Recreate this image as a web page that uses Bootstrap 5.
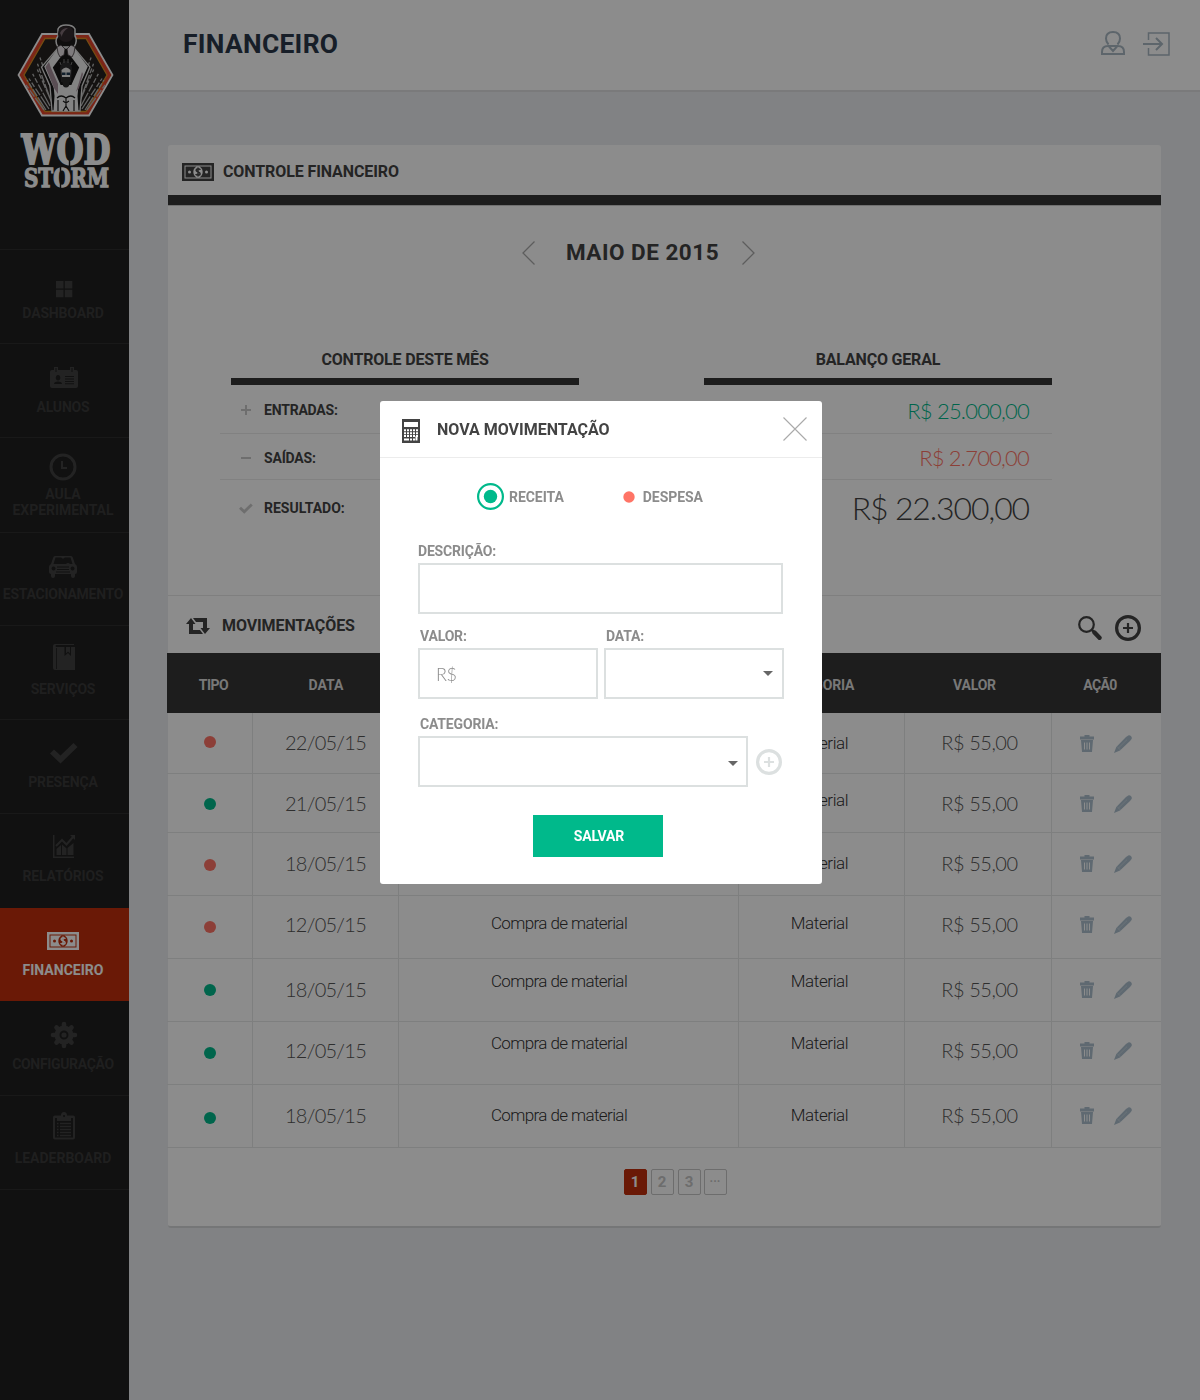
<!DOCTYPE html>
<html lang="pt-BR">
<head>
<meta charset="utf-8">
<meta name="viewport" content="width=device-width, initial-scale=1">
<title>WOD Storm - Financeiro</title>
<link href="https://cdn.jsdelivr.net/npm/bootstrap@5.3.0/dist/css/bootstrap.min.css" rel="stylesheet">
<style>
body{font-family:Roboto,"Liberation Sans",sans-serif;font-weight:700;background:#ecedf0;width:1200px;height:1400px;overflow:hidden;color:#434343;line-height:1}
svg{display:block;flex:none}
/* sidebar */
.side{width:129px;height:1400px;background:#1f1f1f;flex:none}
.brand{height:250px;padding:24px 0 0 16px;border-bottom:1px solid #2e2e2e}
.brand svg{overflow:visible}
.side .nav-link{height:94px;padding:0 3px 23px 0;border-bottom:1px solid #2e2e2e;border-radius:0;color:#393939;font-size:14px;line-height:16px;letter-spacing:-.17px;text-align:center;white-space:nowrap}
.side .nav-link svg{margin:0 0 7px 2px;fill:#414141}
.side .nav-link.active{background:#c12f0b;color:#fff;border-color:#c12f0b;height:93px;padding-bottom:22px;letter-spacing:0}
.side .nav-link.active svg{fill:#fff;margin-left:0}
.side .i-dash,.side .i-alu{padding-bottom:22px}
.side .i-dash svg{margin-bottom:2px}
.side .i-aula{height:95px;padding-bottom:14px;letter-spacing:-.04px}
.side .i-aula span{line-height:15.500px}
.side .i-aula svg,.side .i-car svg{margin-bottom:6px;margin-left:0}
.side .i-car{height:93px;letter-spacing:-.25px}
.side .i-car svg{margin-bottom:5px}
.side .i-book{padding-bottom:22px}
.side .i-book svg,.side .i-lead svg{margin-bottom:10px}
.side .i-rel{border-color:#1f1f1f}
.side .i-rel svg{margin-bottom:8px}
.side .i-conf{height:95px;letter-spacing:-.34px}
.side .i-lead{letter-spacing:0}
/* top bar */
.top{height:92px;background:#fff;border-bottom:2px solid #dedfe0;padding:0 30px 0 54px}
.top h1{font-size:26.4px;font-weight:700;color:#2a384a;margin:0;letter-spacing:.3px}
.top-icons{color:#a9b8c3;padding-bottom:5px;gap:17px}
/* main panel */
.panel{width:993px;margin:53px 0 0 39px;background:#fff;border-radius:3px;border-bottom:2px solid #d5d7d9;height:1083px}
.panel-top{height:50px;padding:3px 0 0 14px;gap:9px}
.ttl{font-size:16px;font-weight:700;margin:0;letter-spacing:-.1px}
.bar{height:11px;background:#353535;border-bottom:1px solid #ccc}
.month{height:93px;padding-right:52px}
.month h2{font-size:22.5px;font-weight:700;margin:0 23px 0 31px;letter-spacing:.5px}
.sum{padding:41px 109px 0 52px}
.sumcol{width:359px}
.sumhead{height:45px;margin-left:11px;padding-top:2px;border-bottom:7px solid #353535}
.sumhead .ttl{letter-spacing:-.18px}
.sumrow{padding:2px 23px 0 20px;font-size:14px;letter-spacing:-.2px;border-bottom:1px solid #ececec}
.sumrow svg{margin-right:12px}
.s1{height:49px}.s2{height:46px}.s3{height:54px;border:0;letter-spacing:0}
.money{font-family:Lato,sans-serif;font-weight:300;font-size:22px;letter-spacing:-.8px}
.s1 .money{padding-top:1px}
.money-xl{font-size:32px;letter-spacing:-1.15px}
.gr{color:#00b98b}.rd{color:#ff7466}
.mov{height:58px;margin-top:61px;border-top:1px solid #e8e8e8;padding:3px 20px 0 18px;color:#434343}
.mov-title{gap:12px}.mov-tools{gap:13px;padding-top:4px}
/* transactions */
.tx{table-layout:fixed;width:994px;margin:0 0 0 -1px;border-collapse:separate;border-spacing:0}
.tx th{height:60px;background:#353535;color:#dadada;font-size:14px;text-align:center;vertical-align:middle;padding:4px 0 0;letter-spacing:-.2px}
.tx th:nth-child(1){padding-left:7px;letter-spacing:-.5px}.tx th:nth-child(2){letter-spacing:0}
.tx th:nth-child(4){padding-right:10px}.tx th:nth-child(5){padding-right:8px}.tx th:nth-child(6){padding-right:13px;letter-spacing:-.6px}
.tx td{padding:0;text-align:center;vertical-align:middle;border-bottom:1px solid #e6e7e8;border-right:1px solid #e6e7e8;height:63px}
.tx td:last-child{border-right:0;padding-right:2px}
.tx tr:nth-child(1) td{height:61px}.tx tbody tr:nth-child(2) td{height:59px}
.tx .dt{font-family:Lato,sans-serif;font-weight:300;font-size:20px;letter-spacing:-.75px;color:#555;padding:0 0 2px 0}
.tx .vl{letter-spacing:-.45px;padding-left:3px}
.tx .ds{font-weight:300;font-size:17px;letter-spacing:-.6px;color:#333;padding-right:19px}
.tx .ct{letter-spacing:-.38px;padding-right:4px}
.dot{width:12px;height:12px;border-radius:50%;margin:0 auto}
.bg-g{background:#00b98b}.bg-r{background:#ff7466}
.act{fill:#adc0ce;gap:20px}
.tx tr:nth-child(2) .dt{padding-bottom:0}
.tx tr:nth-child(4) .dt,.tx tr:nth-child(6) .dt{padding-bottom:6px}
.tx tr:nth-child(4) .ac,.tx tr:nth-child(6) .ac{padding-bottom:4px}
.tx tr:nth-child(-n+2) .ac{padding-top:2px}
.tx tr:nth-child(2) .ds{padding-bottom:5px}.tx tr:nth-child(3) .ds{padding-bottom:2px}
.tx tr:nth-child(4) .ds{padding-bottom:7px}.tx tr:nth-child(5) .ds{padding-bottom:17px}
.tx tr:nth-child(6) .ds{padding-bottom:19px}.tx tr:nth-child(7) .ds{padding-bottom:1px}
.tx tr:nth-child(1) .tp{padding-bottom:2px}
.tx tr:nth-child(2) .tp,.tx tr:nth-child(3) .tp{padding-top:2px}.tx tr:nth-child(7) .tp{padding-top:4px}
.pagination{margin:21px 0 0 21px;gap:4px;--bs-pagination-padding-x:0;--bs-pagination-padding-y:0}
.pagination .page-item .page-link{width:23px;height:26px;line-height:24px;text-align:center;font-size:15px;color:#c6c6c6;border:1px solid #c6c6c6;border-radius:2px;background:#fff;margin:0}
.pagination .page-item:last-child{margin-left:-1px}
.pagination .page-item:last-child .page-link{font-size:12px}
.pagination .page-item.active .page-link{background:#c12f0b;border-color:#c12f0b;color:#fff}
/* dialog */
.modal-backdrop{--bs-backdrop-opacity:.45}
.modal-dialog{width:442px;max-width:none;margin:401px 0 0 380px}
.modal-content{border:0;border-radius:3px;height:483px}
.modal-header{height:57px;padding:0 15px 0 22px;border-bottom:1px solid #ececec;border-radius:0;gap:17px}
.modal-header svg:first-child{margin-top:4px}.modal-header .ttl{letter-spacing:0;padding-top:2px}
.modal-body{padding:25px 38px 27px;color:#8c8c8c;font-size:14px;letter-spacing:-.18px}
.kinds{height:27px;padding-left:59px;margin-bottom:33px;gap:59px;letter-spacing:-.05px}
.kinds label:first-child{gap:5px}.kinds label+label{gap:8px}
.field{display:block;height:16px;line-height:16px;margin-bottom:4px}
.duo{gap:6px;margin:14px -1px 17px 0}
.duo .field,.field.cat{padding-left:2px}
.form-control.box{height:51px;border:2px solid #dce0e0;border-radius:0;padding:0 16px;color:#8c8c8c;background:#fff;font:300 18px Lato,sans-serif;letter-spacing:-.5px}
.box.w-full{width:365px}.box.w-half{width:180px}.box.w-cat{width:330px}
.box.pick{padding-right:9px;fill:#666}
.w-cat.pick{padding-right:8px}
.addcat{color:#dce0e0;margin-left:8px}
.btn.save{width:130px;height:42px;border-radius:0;border:0;background:#00b98b;color:#fff;font-size:14px;font-weight:700;letter-spacing:-.15px;padding:1px 0 0 2px;margin:28px 0 0 115px;display:block}
</style>
</head>
<body>
<svg width="0" height="0" class="position-absolute">
<defs>
<symbol id="bill" viewBox="0 0 32 18"><path fill-rule="evenodd" d="M0 0H32V18H0ZM2.500 2.500V15.500H29.500V2.500ZM3.500 3.500H28.500V14.500H3.500ZM16 3.300A4.700 5.700 0 0 0 16 14.700A4.700 5.700 0 0 0 16 3.300ZM7.500 7.500a1.500 1.500 0 1 0 0 3a1.500 1.500 0 0 0 0-3ZM24.500 7.500a1.500 1.500 0 1 0 0 3a1.500 1.500 0 0 0 0-3Z"/><path d="M18.300 6.900C17.600 5.300 14.100 5.300 14.100 7.300C14.100 9.300 18.100 8.700 18.100 10.800C18.100 12.800 14.400 12.700 13.700 11M16 4.400V13.600" fill="none" stroke="currentColor" stroke-width="1.500"/></symbol>
<symbol id="trash" viewBox="0 0 14 17"><path fill-rule="evenodd" d="M0 1.500H4.500V0H9.500V1.500H14V4.500H0ZM1 5H13L12 17H2ZM4 7.500V14.500H5V7.500ZM6.500 7.500V14.500H7.500V7.500ZM9 7.500V14.500H10V7.500Z"/></symbol>
<symbol id="pen" viewBox="0 0 18 18"><path d="M12 2L13.200 1.200Q15 -.6 16.900 1Q18.700 2.900 17 4.700L16 6L6 15.500L0 18L2.300 12Z"/><path d="M4.500 13L13 4.700M3 11.500L6.500 15" stroke="#fff" stroke-opacity=".35" stroke-width=".8"/></symbol>
<symbol id="plus" viewBox="0 0 26 26"><circle cx="13" cy="13" r="11.400" fill="none" stroke="currentColor" stroke-width="3.200"/><path d="M13 8V18M8 13H18" stroke="currentColor" stroke-width="2.200"/></symbol>
<symbol id="tick" viewBox="0 0 28 22"><path d="M0 11.500L4 7.500L10.500 13.500L23.500 1L27.500 5L10.500 21.500Z"/></symbol>
<symbol id="caret" viewBox="0 0 10 5"><path d="M0 0H10L5 5Z"/></symbol>
</defs>
</svg>
<div class="d-flex">
<aside class="side">
  <div class="brand">
    <svg width="98" height="170" viewBox="16 24 98 170">
      <path d="M41.500 33H89.500L113.500 75L89.500 116.500H41.500L17.500 75Z" fill="#fff"/>
      <path d="M42.500 35H88.500L111.500 75L88.500 114.500H42.500L19.500 75Z" fill="#e2442b"/>
      <path d="M45 38.500H86L107 75L86 111.500H45L24 75Z" fill="#26221f" stroke="#d58a20" stroke-width="1.300"/>
      <g stroke="#b5b5b5" stroke-width="1.300" stroke-dasharray="15 1.500 8 2 5 2 3 40">
        <path d="M46 110L27 80M49 109L26 74M50 106L30 69M52 103L34 62M85 110L104 80M82 109L105 74M81 106L101 69M79 103L97 62M44 110L26 85M87 110L105 85M52 92L38 52M79 92L93 52M50 98L35 57M81 98L96 57"/>
      </g>
      <path d="M58 48L41.500 67L50 86L52 111H80L82 86L90 67L74 48Z" fill="#161616" stroke="#dcdcdc" stroke-width="1.300"/>
      <path d="M60.500 51L48.500 67L57 86M71.500 51L83.500 67L75 86" fill="none" stroke="#efefef" stroke-width="7.500"/>
      <path d="M53 80L61 85H71L79 80L77.500 96L78.500 111H53.500L54.500 96Z" fill="#efefef"/>
      <path d="M45.500 67L49 62L51 68L58 84L58 94L54 88ZM82 72L78.500 84L76 92L79 88L83 74Z" fill="#a58e9a"/>
      <path d="M60 69Q61 61 66 61Q71 61 72 69L71 82H61Z" fill="#2d2d2f"/>
      <path d="M61.500 70Q66 65 70.500 70L70 77H62Z" fill="#e9e9e9"/>
      <path d="M62 72.500H65.500V75H62ZM66.500 72.500H70V75H66.500Z" fill="#1f3a50"/><path d="M62 79Q66 75.500 70 79L69 86Q66 89 63 86Z" fill="#2a2a2a"/>
      <path d="M61 65L60 62M64 63V59M68 63V59M71 65L72 62" stroke="#777" stroke-width="1"/>
      <path d="M57 98Q61 94 66 98Q71 94 75 98M58 100V111M74 100V111M66 98V108M63 101L66 103L69 101M66 106L63 111M66 106L69 111" fill="none" stroke="#1d1d1d" stroke-width="1.200"/>
      <path d="M58 47Q54 41 58 36V29Q60 25 66 25Q73 25 75 29V36Q78 41 74 47Z" fill="#1d1a1b" stroke="#e8e8e8" stroke-width="1.500"/>
      <circle cx="66" cy="34" r="8" fill="#332b2e"/><path d="M60 33Q62 28 68 28Q62 32 62 37Z" fill="#806d75"/>
      <path d="M58 53L57 47L61 45L65 49L64 55L60 57ZM74 53L75 47L71 45L67 49L68 55L72 57Z" fill="#e6e0e3" stroke="#3a3336" stroke-width=".8"/>
      <g fill="#fff" stroke="#fff" font-family="DejaVu Serif,serif" font-weight="700">
        <text x="21.500" y="164" font-size="41.500" stroke-width="2" textLength="89" lengthAdjust="spacingAndGlyphs">WOD</text>
        <text x="24" y="186.500" font-size="25.500" stroke-width="1.300" textLength="85" lengthAdjust="spacingAndGlyphs">STORM</text>
      </g>
      <path d="M69.500 131V167M60.500 166.500V189" stroke="#1f1f1f" stroke-width="1.400"/>
    </svg>
  </div>
  <nav class="nav flex-column flex-nowrap">
    <a class="nav-link d-flex flex-column align-items-center justify-content-end i-dash"><svg width="28" height="28"><path d="M6 6h7.500v7.500H6zM14.800 6h7.500v7.500h-7.500zM6 14.800h7.500v7.500H6zM14.800 14.800h7.500v7.500h-7.500z"/></svg><span>DASHBOARD</span></a>
    <a class="nav-link d-flex flex-column align-items-center justify-content-end i-alu"><svg width="28" height="28"><path fill-rule="evenodd" d="M4 3H8V6H20V3H24V6H26Q28 6 28 8V22Q28 24 26 24H2Q0 24 0 22V8Q0 6 2 6H4ZM5.500 4V8H6.500V4ZM21.500 4V8H22.500V4ZM8 11a2.300 2.800 0 1 0 .1 0ZM4 20Q4 17.500 8 17.500Q12 17.500 12 20ZM15 12V13H24V12ZM15 14.500V15.500H24V14.500ZM15 17V18H24V17ZM15 19.300V20.300H24V19.300Z"/></svg><span>ALUNOS</span></a>
    <a class="nav-link d-flex flex-column align-items-center justify-content-end i-aula"><svg width="28" height="28"><circle cx="14" cy="14" r="12" fill="none" stroke="#414141" stroke-width="3"/><path d="M12 8H14V14H18V16H12Z"/></svg><span>AULA<br>EXPERIMENTAL</span></a>
    <a class="nav-link d-flex flex-column align-items-center justify-content-end i-car"><svg width="28" height="28"><path fill-rule="evenodd" d="M6 3H22Q23.500 3 24 5L26 11Q28 12 28 14V19Q28 21 26 21V23Q26 25 24 25Q22 25 22 23V21H6V23Q6 25 4 25Q2 25 2 23V21Q0 21 0 19V14Q0 12 2 11L4 5Q4.500 3 6 3ZM6.500 4.500L4.500 11H17A2.500 2.500 0 0 1 21 11H23.500L21.500 4.500ZM4.500 13.500a2 2 0 1 0 .1 0ZM23.500 13.500a2 2 0 1 0 .1 0ZM8 13.500V14.500H20V13.500ZM8 16V17H20V16ZM7 18.500V19.500H21V18.500Z"/><path d="M12 4L14 6L16 4Z"/></svg><span>ESTACIONAMENTO</span></a>
    <a class="nav-link d-flex flex-column align-items-center justify-content-end i-book"><svg width="28" height="28"><path d="M5 1H24V2H6Q5 3 6 4H14.500V13L18 10L21 13V4H25V27H5Q3 27 3 25V3Q3 1 5 1Z"/><path d="M16 4H20V10.500L18 8.500L16 10.500Z"/><path d="M6.500 5V26" stroke="#1f1f1f" stroke-width=".8"/></svg><span>SERVIÇOS</span></a>
    <a class="nav-link d-flex flex-column align-items-center justify-content-end"><svg width="28" height="28"><use href="#tick" x="0" y="3" width="28" height="22"/></svg><span>PRESENÇA</span></a>
    <a class="nav-link d-flex flex-column align-items-center justify-content-end i-rel"><svg width="28" height="28"><path d="M3 3H4.500V24.500H24V26H3ZM6.500 17L11 13V23H6.500ZM12 12.500L16.500 16.500V23H12ZM17.500 16L23.500 11V23H17.500Z"/><path d="M6 14L12 8L16.500 12.500L23 5" fill="none" stroke="#414141" stroke-width="2"/><path d="M20 3H25V8Z"/></svg><span>RELATÓRIOS</span></a>
    <a class="nav-link active d-flex flex-column align-items-center justify-content-end"><svg width="32" height="28"><use href="#bill" y="5" width="32" height="18"/></svg><span>FINANCEIRO</span></a>
    <a class="nav-link d-flex flex-column align-items-center justify-content-end i-conf"><svg width="28" height="28"><circle cx="14" cy="14" r="7" fill="none" stroke="#414141" stroke-width="5"/><circle cx="14" cy="14" r="2.600"/><path d="M14 5V3M14 23V25M5 14H3M23 14H25M7.800 7.800L6.500 6.500M20.200 7.800L21.500 6.500M7.800 20.200L6.500 21.500M20.200 20.200L21.500 21.500" stroke="#414141" stroke-width="4.600" stroke-linecap="round"/></svg><span>CONFIGURAÇÃO</span></a>
    <a class="nav-link d-flex flex-column align-items-center justify-content-end i-lead"><svg width="28" height="28"><path fill-rule="evenodd" d="M5 3.500H11Q11 0 14 0Q17 0 17 3.500H23Q25 3.500 25 5.500V25.500Q25 27.500 23 27.500H5Q3 27.500 3 25.500V5.500Q3 3.500 5 3.500ZM5 6V25.500H23V6H21V9H7V6ZM14 3a1 1 0 1 0 .1 0Z"/><path d="M7 11.500H8.500M10 11.500H21M7 14.500H8.500M10 14.500H21M7 17.500H8.500M10 17.500H21M7 20.500H8.500M10 20.500H21M7 23.500H8.500M10 23.500H21" stroke="#414141" stroke-width="1.600"/></svg><span>LEADERBOARD</span></a>
  </nav>
</aside>
<div class="flex-grow-1">
  <header class="top d-flex align-items-center justify-content-between">
    <h1>FINANCEIRO</h1>
    <div class="top-icons d-flex">
      <svg width="24" height="26" viewBox="0 0 24 26" fill="none" stroke="currentColor" stroke-width="2"><path d="M7.500 14.500Q5 12 5 8.500Q5 2 12 2Q19 2 19 8.500Q19 12 16.500 14.500M7 16Q1 16 1 22V24H23V22Q23 16 17 16ZM8 16.500L12 21L16 16.500"/></svg>
      <svg width="28" height="26" viewBox="0 0 28 26" fill="none" stroke="currentColor" stroke-width="2"><path d="M6.500 10V3H27V25H6.500V18" stroke-width="1.500"/><path d="M1 14H20M14 8L20 14L14 20"/></svg>
    </div>
  </header>
  <main class="panel">
    <div class="panel-top d-flex align-items-center"><svg width="32" height="18" fill="#434343"><use href="#bill" width="32" height="18"/></svg><h2 class="ttl">CONTROLE FINANCEIRO</h2></div>
    <div class="bar"></div>
    <div class="month d-flex align-items-center justify-content-center">
      <svg width="13" height="24" fill="none" stroke="#aaa" stroke-width="1.300"><path d="M12.500 .5L1 12L12.500 23.500"/></svg>
      <h2>MAIO DE 2015</h2>
      <svg width="13" height="24" fill="none" stroke="#aaa" stroke-width="1.300"><path d="M.5 .5L12 12L.5 23.500"/></svg>
    </div>
    <div class="sum d-flex justify-content-between">
      <section class="sumcol">
        <div class="sumhead d-flex align-items-center justify-content-center"><h3 class="ttl">CONTROLE DESTE MÊS</h3></div>
        <div class="sumrow s1 d-flex align-items-center"><svg width="12" height="12"><path d="M6 1V11M1 6H11" stroke="#c9c9c9" stroke-width="2"/></svg><span>ENTRADAS:</span></div>
        <div class="sumrow s2 d-flex align-items-center"><svg width="12" height="12"><path d="M1 6H11" stroke="#c9c9c9" stroke-width="2"/></svg><span>SAÍDAS:</span></div>
        <div class="sumrow s3 d-flex align-items-center"><svg width="12" height="12" fill="#c9c9c9" class="overflow-visible"><use href="#tick" x="-1" y="1" width="14" height="11"/></svg><span>RESULTADO:</span></div>
      </section>
      <section class="sumcol">
        <div class="sumhead d-flex align-items-center justify-content-center"><h3 class="ttl">BALANÇO GERAL</h3></div>
        <div class="sumrow s1 d-flex align-items-center justify-content-end"><span class="money gr">R$ 25.000,00</span></div>
        <div class="sumrow s2 d-flex align-items-center justify-content-end"><span class="money rd">R$ 2.700,00</span></div>
        <div class="sumrow s3 d-flex align-items-center justify-content-end"><span class="money money-xl">R$ 22.300,00</span></div>
      </section>
    </div>
    <div class="mov d-flex align-items-center justify-content-between">
      <div class="mov-title d-flex align-items-center"><svg width="24" height="16" fill="#434343"><path d="M5 0L9.500 6H7V12H14L17 16H3V6H0ZM7 0H21V10H24L19 16L14.500 10H17V4H10Z"/></svg><h2 class="ttl">MOVIMENTAÇÕES</h2></div>
      <div class="mov-tools d-flex align-items-center"><svg width="24" height="24" fill="none" stroke="currentColor"><circle cx="8.500" cy="8.500" r="7.300" stroke-width="2.200"/><path d="M13.500 13.500L16 16" stroke-width="2.500"/><path d="M16.500 16.500L21.500 21.800" stroke-width="4.400" stroke-linecap="round"/></svg><svg width="26" height="26"><use href="#plus" width="26" height="26"/></svg></div>
    </div>
    <table class="tx">
      <colgroup><col width="86"><col width="146"><col width="340"><col width="166"><col width="147"><col width="109"></colgroup>
      <thead><tr><th>TIPO</th><th>DATA</th><th>DESCRIÇÃO</th><th>CATEGORIA</th><th>VALOR</th><th>AÇÃ0</th></tr></thead>
      <tbody id="rows"></tbody>
    </table>
    <ul class="pagination justify-content-center">
      <li class="page-item active"><a class="page-link">1</a></li><li class="page-item"><a class="page-link">2</a></li><li class="page-item"><a class="page-link">3</a></li><li class="page-item"><a class="page-link">···</a></li>
    </ul>
  </main>
</div>
</div>
<div class="modal-backdrop show"></div>
<div class="modal show d-block" tabindex="-1">
  <div class="modal-dialog"><div class="modal-content">
    <div class="modal-header d-flex align-items-center">
      <svg width="18" height="24"><path fill="#434343" fill-rule="evenodd" d="M0 0H18V24H0ZM2 3V8H16V3Z"/><path d="M2 11.300H16M2 14.200H16M2 17.100H16" stroke="#fff" stroke-width="2" stroke-dasharray="2 1"/><path d="M2 20.500H7M8 20.500H10M11 20.500H13M14.500 17V21.500" stroke="#fff" stroke-width="2"/></svg>
      <h2 class="ttl flex-grow-1">NOVA MOVIMENTAÇÃO</h2>
      <svg width="24" height="24" stroke="#aaa" stroke-width="1.100"><path d="M.5 .5L23.500 23.500M23.500 .5L.5 23.500"/></svg>
    </div>
    <div class="modal-body">
      <div class="kinds d-flex align-items-center">
        <label class="d-flex align-items-center"><svg width="27" height="27"><circle cx="13.500" cy="13.500" r="12.400" fill="none" stroke="#00b98b" stroke-width="2.200"/><circle cx="13.500" cy="13.500" r="6.700" fill="#00b98b"/></svg>RECEITA</label>
        <label class="d-flex align-items-center"><svg width="12" height="12"><circle cx="6" cy="6" r="5.700" fill="#ff7466"/></svg>DESPESA</label>
      </div>
      <label class="field">DESCRIÇÃO:</label>
      <div class="form-control box w-full"></div>
      <div class="duo d-flex">
        <div><label class="field">VALOR:</label><div class="form-control box w-half d-flex align-items-center">R$</div></div>
        <div><label class="field">DATA:</label><div class="form-control box w-half pick d-flex align-items-center justify-content-end"><svg width="10" height="5"><use href="#caret" width="10" height="5"/></svg></div></div>
      </div>
      <label class="field cat">CATEGORIA:</label>
      <div class="d-flex align-items-center"><div class="form-control box w-cat pick d-flex align-items-center justify-content-end"><svg width="10" height="5" class="mt-1"><use href="#caret" width="10" height="5"/></svg></div><svg class="addcat" width="26" height="26"><use href="#plus" width="26" height="26"/></svg></div>
      <button class="btn save">SALVAR</button>
    </div>
  </div></div>
</div>
<script>
const rows=[['r','22/05/15'],['g','21/05/15'],['r','18/05/15'],['r','12/05/15'],['g','18/05/15'],['g','12/05/15'],['g','18/05/15']];
document.getElementById('rows').innerHTML=rows.map(r=>`<tr><td class="tp"><div class="dot bg-${r[0]}"></div></td><td class="dt">${r[1]}</td><td class="ds">Compra de material</td><td class="ds ct">Material</td><td class="dt vl">R$ 55,00</td><td class="ac"><div class="d-flex justify-content-center act"><svg width="14" height="17"><use href="#trash" width="14" height="17"/></svg><svg width="18" height="18"><use href="#pen" width="18" height="18"/></svg></div></td></tr>`).join('');
</script>
<script src="https://cdn.jsdelivr.net/npm/bootstrap@5.3.0/dist/js/bootstrap.bundle.min.js"></script>
</body>
</html>
